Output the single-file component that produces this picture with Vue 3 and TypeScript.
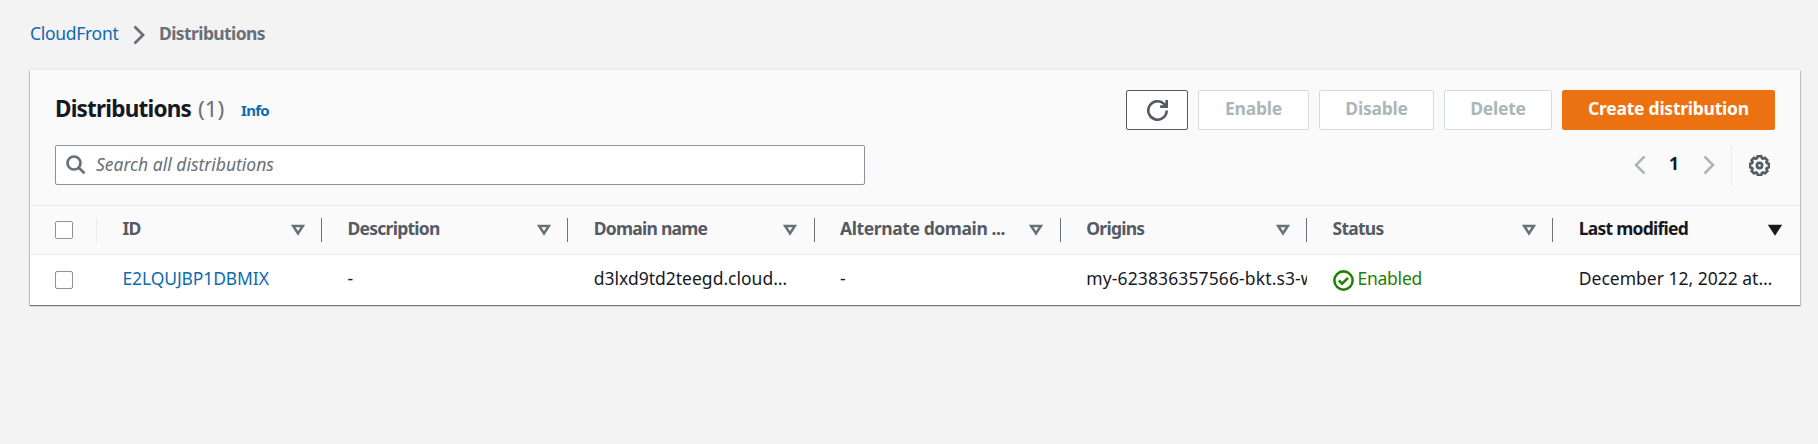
<script setup lang="ts">
import { ref } from 'vue'

interface Column {
  key: string
  label: string
  sorted?: boolean
}

const columns: Column[] = [
  { key: 'id', label: 'ID' },
  { key: 'description', label: 'Description' },
  { key: 'domain', label: 'Domain name' },
  { key: 'alternate', label: 'Alternate domain ...' },
  { key: 'origins', label: 'Origins' },
  { key: 'status', label: 'Status' },
  { key: 'modified', label: 'Last modified', sorted: true },
]

const row: Record<string, string> = {
  id: 'E2LQUJBP1DBMIX',
  description: '-',
  domain: 'd3lxd9td2teegd.cloud…',
  alternate: '-',
  origins: 'my-623836357566-bkt.s3-w',
  status: 'Enabled',
  modified: 'December 12, 2022 at…',
}

const search = ref('')
</script>

<template>
  <main class="page">
    <nav class="crumbs">
      <a class="link t-root">CloudFront</a>
      <svg class="crumb-arrow" viewBox="0 0 12 20"><path d="M1.500 1.500l8.500 8.500-8.500 8.500" /></svg>
      <span class="here">Distributions</span>
    </nav>

    <section class="card">
      <header class="head">
        <div class="title-row">
          <h1 class="title">Distributions</h1>
          <span class="count">(1)</span>
          <a class="link info">Info</a>
          <div class="actions">
            <button class="btn refresh" aria-label="Refresh">
              <svg viewBox="0 0 16 16"><path d="M15 8a7 7 0 1 1-2.1-5L15 5M15 0v5h-5" /></svg>
            </button>
            <button class="btn off enable" disabled><span>Enable</span></button>
            <button class="btn off disable" disabled><span>Disable</span></button>
            <button class="btn off delete" disabled><span>Delete</span></button>
            <button class="btn primary"><span>Create distribution</span></button>
          </div>
        </div>
        <div class="filter-row">
          <label class="search">
            <svg viewBox="0 0 20 20"><circle cx="8" cy="8" r="6.500" /><path d="M12.500 12.500l6 5.700" /></svg>
            <input v-model="search" placeholder="Search all distributions" />
          </label>
          <div class="pager">
            <svg class="chev" viewBox="0 0 12 20"><path d="M10.500 1.500L2 10l8.500 8.500" /></svg>
            <span class="page-no">1</span>
            <svg class="chev" viewBox="0 0 12 20"><path d="M1.500 1.500L10 10l-8.500 8.500" /></svg>
            <span class="sep"></span>
            <svg class="gear" viewBox="0 0 20 20">
              <path d="M8.300 1.100h3.400l.6 1.900 1.100.5 1.800-.9 2.300 2.300-.9 1.800.5 1.100 1.900.6v3.300l-1.900.6-.5 1.100.9 1.800-2.300 2.300-1.800-.9-1.100.5-.6 1.900H8.300l-.6-1.900-1.100-.5-1.800.9-2.300-2.300.9-1.800-.5-1.100-1.900-.6V8.400l1.900-.6.5-1.100-.9-1.800 2.300-2.300 1.800.9 1.100-.5z" />
              <circle cx="10" cy="10" r="2.500" />
            </svg>
          </div>
        </div>
      </header>

      <div class="grid labels">
        <div class="check"><span class="box"></span></div>
        <div v-for="c in columns" :key="c.key" class="th" :class="[c.key, { sorted: c.sorted }]">
          <span class="label">{{ c.label }}</span>
          <svg class="sort" viewBox="0 0 14 12"><path d="M2.200 2h9.600L7 9.500z" /></svg>
        </div>
      </div>

      <div class="grid values">
        <div class="check"><span class="box"></span></div>
        <div v-for="c in columns" :key="c.key" class="td" :class="c.key">
          <svg v-if="c.key === 'status'" class="ok" viewBox="0 0 20 20">
            <circle cx="10" cy="10" r="8.700" /><path d="M5.600 10l3.100 3 5.600-5.600" />
          </svg>
          <span class="value">{{ row[c.key] }}</span>
        </div>
      </div>
    </section>
  </main>
</template>

<style>
body {
  background: #f3f3f3;
}
</style>

<style scoped>
.page {
  box-sizing: border-box;
  height: 444px;
  padding: 20px 18px 0 30px;
  background: #f3f3f3;
  color: #16191f;
  font: 17.500px/27.500px "Noto Sans", "Open Sans", sans-serif;
  white-space: nowrap;
  overflow: hidden;
}
svg {
  fill: none;
  stroke: currentColor;
  flex: none;
}
.link {
  color: #0f6ab0;
}
.crumbs {
  display: flex;
  align-items: center;
  height: 28px;
}
.t-root {
  width: 103px;
  letter-spacing: -0.300px;
}
.crumb-arrow {
  width: 12px;
  height: 20px;
  stroke-width: 2.800;
  color: #687078;
  margin-top: 2px;
}
.here {
  margin-left: 14px;
  font-weight: 700;
  color: #687078;
  letter-spacing: -0.600px;
}
.card {
  margin-top: 22px;
  height: 235px;
  background: #fff;
  box-shadow: 0 1px 1px 0 #6f7b7d, 1px 1px 1px 0 #c8cece, -1px 1px 1px 0 #c8cece, 0 -1px 1px 0 #e6e8e8;
}
.head {
  box-sizing: border-box;
  height: 135px;
  padding: 20px 25px 0;
  background: #fafafa;
}
.title-row {
  display: flex;
  height: 40px;
}
.title {
  margin: 0;
  width: 143px;
  font-size: 22.500px;
  line-height: 37px;
  font-weight: 700;
  letter-spacing: -0.800px;
}
.count {
  width: 43px;
  font-size: 22.500px;
  line-height: 37px;
  color: #687078;
}
.info {
  font-size: 15px;
  line-height: 41px;
  font-weight: 700;
  letter-spacing: -0.700px;
}
.actions {
  display: flex;
  gap: 10px;
  margin-left: auto;
}
.btn {
  box-sizing: border-box;
  height: 40px;
  padding: 0;
  border: 1px solid #d5dbdb;
  border-radius: 2px;
  background: #fff;
  font: 700 17.500px/36px "Noto Sans", sans-serif;
  letter-spacing: -0.250px;
}
.btn span {
  display: block;
  margin-top: -4px;
}
.refresh {
  width: 62px;
  display: flex;
  align-items: center;
  justify-content: center;
  border-color: #545b64;
  color: #545b64;
}
.refresh svg {
  width: 21px;
  height: 21px;
  stroke-width: 2;
}
.off {
  color: #aab7b8;
}
.enable {
  width: 111px;
}
.disable {
  width: 115px;
}
.delete {
  width: 108px;
}
.primary {
  width: 213px;
  border-color: #ec7211;
  background: #ec7211;
  color: #fff;
}
.filter-row {
  display: flex;
  justify-content: space-between;
  margin-top: 15px;
  height: 40px;
}
.search {
  box-sizing: border-box;
  display: flex;
  align-items: center;
  width: 810px;
  height: 40px;
  padding-left: 10px;
  border: 1px solid #879596;
  border-radius: 2px;
  background: #fff;
  color: #687078;
}
.search svg {
  width: 20px;
  height: 20px;
  stroke-width: 2.700;
}
.search input {
  flex: 1;
  margin-left: 10px;
  padding: 0 0 1px;
  border: 0;
  outline: 0;
  background: transparent;
  font: italic 17.500px/27px "Noto Sans", sans-serif;
  letter-spacing: 0;
}
.search input::placeholder {
  color: #687078;
}
.pager {
  display: flex;
  align-items: center;
  margin-right: 5.500px;
}
.chev {
  width: 12px;
  height: 20px;
  stroke-width: 2.500;
  color: #aab7b8;
}
.page-no {
  width: 57px;
  margin-top: -2px;
  text-align: center;
  font-weight: 700;
}
.sep {
  width: 1px;
  height: 40px;
  margin: 0 17px 0 16px;
  background: #eaeded;
}
.gear {
  width: 21px;
  height: 21px;
  stroke-width: 2.500;
  color: #545b64;
}
.grid {
  display: grid;
  grid-template-columns: 67px 225px repeat(5, 246.250px) 1fr;
}
.labels {
  box-sizing: border-box;
  height: 50px;
  border-top: 1px solid #eaeded;
  border-bottom: 1px solid #eaeded;
  background: #fafafa;
  align-items: center;
}
.values {
  height: 50px;
  align-items: center;
}
.check {
  display: flex;
  align-items: center;
  height: 24px;
  padding-left: 25px;
}
.labels .check {
  border-right: 1px solid #eaeded;
}
.box {
  box-sizing: border-box;
  width: 18px;
  height: 18px;
  border: 1px solid #879596;
  border-radius: 2px;
  background: #fff;
}
.th {
  box-sizing: border-box;
  display: flex;
  align-items: center;
  justify-content: space-between;
  height: 24px;
  padding: 0 16.500px 0 25.500px;
  border-right: 1px solid #687078;
  color: #545b64;
  font-weight: 700;
}
.label {
  margin-top: -2px;
  letter-spacing: -0.750px;
}
.alternate .label {
  letter-spacing: -0.400px;
}
.sort {
  width: 14px;
  height: 12px;
  stroke-width: 2.500;
  color: #687078;
}
.sorted {
  border-right: 0;
  padding-right: 18px;
  color: #16191f;
}
.sorted .sort {
  color: #16191f;
  fill: currentColor;
}
.td {
  display: flex;
  align-items: center;
  min-width: 0;
  padding-left: 25.500px;
}
.td.id {
  color: #0f6ab0;
}
.id .value {
  letter-spacing: -0.120px;
}
.origins .value {
  width: 221px;
  letter-spacing: 0.120px;
}
.value {
  margin-top: -2px;
  overflow: hidden;
}
.td.status {
  color: #1d8102;
}
.status .value {
  letter-spacing: -0.250px;
}
.ok {
  width: 21px;
  height: 21px;
  margin-right: 4px;
  stroke-width: 2.400;
}
</style>
